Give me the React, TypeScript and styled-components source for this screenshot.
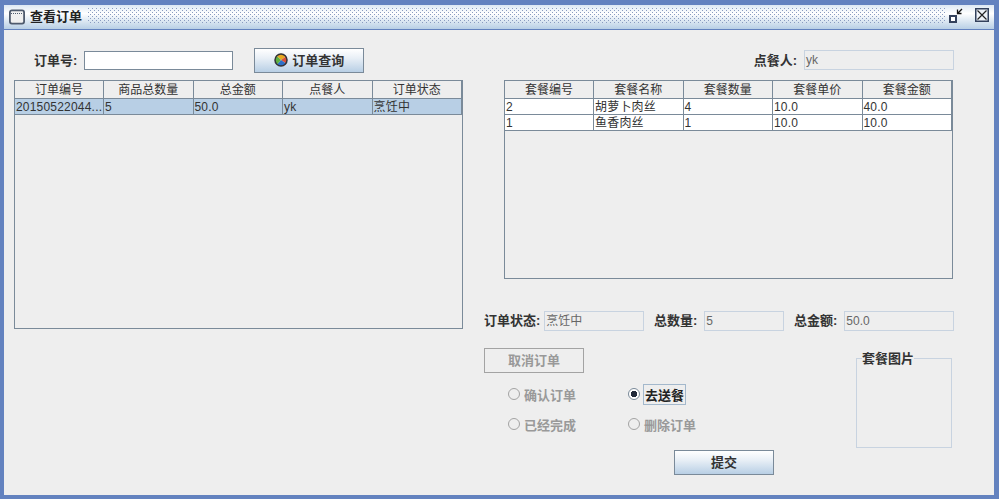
import styled, { createGlobalStyle } from "styled-components";

const FONT = `"Liberation Sans", "Noto Sans CJK SC", sans-serif`;
const LINE = "#7a8a99";
const SOFT = "#c8d3e0";

const orders = [["20150522044...", "5", "50.0", "yk", "烹饪中"]];
const items = [
  ["2", "胡萝卜肉丝", "4", "10.0", "40.0"],
  ["1", "鱼香肉丝", "1", "10.0", "10.0"],
];

const GlobalStyle = createGlobalStyle`
  html, body {
    margin: 0;
    padding: 0;
    background: #eeeeee;
  }
`;

const Frame = styled.div`
  width: 999px;
  height: 499px;
  box-sizing: border-box;
  border: solid #6382bf;
  border-width: 5px 5px 4px 4px;
  display: flex;
  flex-direction: column;
  background: #eeeeee;
  font-family: ${FONT};
  font-size: 13px;
  color: #333333;
  overflow: hidden;
`;

const TitleBar = styled.div`
  height: 25px;
  flex: none;
  display: flex;
  align-items: center;
  padding: 0 5px 0 5px;
  background: linear-gradient(#dde8f3, #ffffff 35%, #b8cfe5);
  border-bottom: 1px solid #6382bf;
  box-sizing: border-box;
`;

const TitleText = styled.span`
  font-weight: bold;
  margin-left: 5px;
  padding-bottom: 3px;
  color: #222222;
`;

const Bumps = styled.div`
  flex: 1;
  height: 16px;
  margin: 0 4px 2px 6px;
  background:
    radial-gradient(circle at 0.5px 0.5px, #8a9cc0 0.7px, transparent 0.7px) 0 0 / 4px 4px,
    radial-gradient(circle at 0.5px 0.5px, #8a9cc0 0.7px, transparent 0.7px) 2px 2px / 4px 4px;
`;

const WindowButtons = styled.div`
  display: flex;
  align-items: center;
  gap: 12px;
  padding-bottom: 4px;
`;

const Body = styled.div`
  flex: 1;
  display: flex;
  padding: 18px 40px 0 10px;
  gap: 21px;
`;

const LeftColumn = styled.div`
  width: 449px;
  display: flex;
  flex-direction: column;
`;

const SearchRow = styled.div`
  height: 25px;
  display: flex;
  align-items: center;
  padding-left: 20px;
  margin-bottom: 7px;
`;

const Label = styled.span`
  font-weight: bold;
  white-space: nowrap;
  padding-bottom: 2px;
`;

const SearchInput = styled.input`
  width: 149px;
  height: 19px;
  box-sizing: border-box;
  margin: 0 21px 1px 7px;
  padding: 0 2px;
  border: 1px solid ${LINE};
  background: #ffffff;
`;

const Button = styled.button<{ $disabled?: boolean }>`
  width: ${(p) => (p.$disabled ? "100px" : "110px")};
  height: 25px;
  box-sizing: border-box;
  display: flex;
  align-items: center;
  justify-content: center;
  gap: 4px;
  padding: 0 0 2px;
  font: bold 13px ${FONT};
  color: ${(p) => (p.$disabled ? "#999999" : "#333333")};
  border: 1px solid ${(p) => (p.$disabled ? "#a3a3a3" : LINE)};
  background: ${(p) =>
    p.$disabled ? "#eeeeee" : "linear-gradient(#ffffff, #e8eff6 40%, #b8cfe5)"};
`;

const SubmitButton = styled(Button)`
  width: 100px;
  margin-left: 190px;
  margin-top: 10px;
`;

const TableBox = styled.div<{ $width: number; $height: number }>`
  width: ${(p) => p.$width}px;
  height: ${(p) => p.$height}px;
  box-sizing: border-box;
  border: 1px solid ${LINE};
  flex: none;
`;

const Grid = styled.table`
  width: 100%;
  table-layout: fixed;
  border-collapse: collapse;
  font-size: 12px;
`;

const HeadCell = styled.th`
  height: 15px;
  padding: 2px 0 0;
  line-height: 15px;
  font-weight: normal;
  text-align: center;
  background: #eeeeee;
  border-right: 1px solid ${LINE};
  border-bottom: 1px solid ${LINE};
  &:first-child {
    width: 88px;
  }
`;

const Cell = styled.td<{ $selected?: boolean }>`
  height: 13px;
  padding: 2px 0 0 1px;
  line-height: 13px;
  letter-spacing: 0.2px;
  white-space: nowrap;
  overflow: hidden;
  background: ${(p) => (p.$selected ? "#b8cfe5" : "#ffffff")};
  border-right: 1px solid ${LINE};
  border-bottom: 1px solid ${LINE};
`;

const RightColumn = styled.div`
  width: 470px;
  display: flex;
  flex-direction: column;
`;

const BuyerRow = styled.div`
  height: 24px;
  display: flex;
  align-items: center;
  justify-content: flex-end;
  gap: 7px;
  margin-bottom: 8px;
`;

const ReadOnly = styled.div<{ $width: number }>`
  width: ${(p) => p.$width}px;
  height: 20px;
  box-sizing: border-box;
  padding-left: 1px;
  font-size: 12px;
  line-height: 18px;
  border: 1px solid ${SOFT};
  color: #666666;
`;

const TableIndent = styled.div`
  padding-left: 20px;
`;

const StatusRow = styled.div`
  display: flex;
  align-items: center;
  margin-top: 31px;
`;

const StatusGroup = styled.div<{ $width: number; $gap: number }>`
  width: ${(p) => p.$width}px;
  display: flex;
  align-items: center;
  gap: ${(p) => p.$gap}px;
`;

const LowerArea = styled.div`
  display: flex;
  justify-content: space-between;
  margin-top: 17px;
`;

const Controls = styled.div`
  display: flex;
  flex-direction: column;
  align-items: flex-start;
`;

const RadioGrid = styled.div`
  display: grid;
  grid-template-columns: 120px 120px;
  grid-auto-rows: 30px;
  align-items: center;
  margin: 7px 0 0 24px;
`;

const RadioItem = styled.div<{ $active?: boolean }>`
  display: flex;
  align-items: center;
  gap: 4px;
  font-weight: bold;
  padding-bottom: 2px;
  color: ${(p) => (p.$active ? "#222222" : "#999999")};
`;

const RadioDot = styled.span<{ $active?: boolean }>`
  width: 12px;
  height: 12px;
  box-sizing: border-box;
  border-radius: 50%;
  border: 1px solid ${(p) => (p.$active ? "#7a8a99" : "#a3a3a3")};
  background: ${(p) =>
    p.$active
      ? "radial-gradient(circle, #222a3a 0 3px, #ffffff 3.5px)"
      : "transparent"};
`;

const Focused = styled.span`
  outline: 1px solid #a3b8cc;
  padding: 0 1px;
`;

const PictureBox = styled.fieldset`
  width: 96px;
  height: 96px;
  box-sizing: border-box;
  margin: 4px 2px 0 0;
  padding: 0;
  border: 1px solid ${SOFT};
`;

const PictureLegend = styled.legend`
  font-weight: bold;
  padding: 0;
  margin-left: 5px;
  line-height: 1;
`;

const FrameIcon = () => (
  <svg width="16" height="16" viewBox="0 0 16 16">
    <rect x="0.9" y="1.4" width="14.2" height="13.2" rx="2" fill="#f0f0f0" stroke="#4f5b6e" strokeWidth="1.8" />
    <path d="M2 4.5h12" stroke="#4f5b6e" strokeDasharray="1 1" />
  </svg>
);

const RestoreIcon = () => (
  <svg width="14" height="15" viewBox="0 0 14 15">
    <rect x="1" y="8" width="6" height="6" fill="#fff" stroke="#33415c" strokeWidth="2" />
    <path d="M13 1 9 5M8.5 1.5V5.5H12.5" fill="none" stroke="#111" strokeWidth="1.3" />
  </svg>
);

const CloseIcon = () => (
  <svg width="14" height="14" viewBox="0 0 14 14">
    <rect x="0.75" y="0.75" width="12.5" height="12.5" fill="#eef2f8" stroke="#33415c" strokeWidth="1.5" />
    <path d="M2.5 2.5l9 9M11.5 2.5l-9 9" stroke="#222" strokeWidth="1.2" />
  </svg>
);

const BallIcon = () => (
  <svg width="14" height="14" viewBox="0 0 14 14">
    <path d="M7 7 2.5 2.8A6 6 0 0 1 12 3.6Z" fill="#e8a820" />
    <path d="M7 7 12 3.6A6 6 0 0 1 12 10.4Z" fill="#d8503a" />
    <path d="M7 7 12 10.4A6 6 0 0 1 3 11.5Z" fill="#2f6fc8" />
    <path d="M7 7 3 11.5A6 6 0 0 1 2.5 2.8Z" fill="#5cb040" />
    <circle cx="7" cy="7" r="6" fill="none" stroke="#33333a" strokeWidth="1.5" />
  </svg>
);

const DataTable = ({
  head,
  rows,
  selected,
}: {
  head: string[];
  rows: string[][];
  selected?: boolean;
}) => (
  <Grid>
    <thead>
      <tr>
        {head.map((h) => (
          <HeadCell key={h}>{h}</HeadCell>
        ))}
      </tr>
    </thead>
    <tbody>
      {rows.map((row) => (
        <tr key={row[0]}>
          {row.map((c, i) => (
            <Cell key={i} $selected={selected}>
              {c}
            </Cell>
          ))}
        </tr>
      ))}
    </tbody>
  </Grid>
);

export default function App() {
  return (
    <>
      <GlobalStyle />
      <Frame>
        <TitleBar>
          <FrameIcon />
          <TitleText>查看订单</TitleText>
          <Bumps />
          <WindowButtons>
            <RestoreIcon />
            <CloseIcon />
          </WindowButtons>
        </TitleBar>
        <Body>
          <LeftColumn>
            <SearchRow>
              <Label>订单号:</Label>
              <SearchInput />
              <Button>
                <BallIcon />
                订单查询
              </Button>
            </SearchRow>
            <TableBox $width={449} $height={249}>
              <DataTable
                head={["订单编号", "商品总数量", "总金额", "点餐人", "订单状态"]}
                rows={orders}
                selected
              />
            </TableBox>
          </LeftColumn>
          <RightColumn>
            <BuyerRow>
              <Label>点餐人:</Label>
              <ReadOnly $width={150}>yk</ReadOnly>
            </BuyerRow>
            <TableIndent>
              <TableBox $width={449} $height={199}>
                <DataTable
                  head={["套餐编号", "套餐名称", "套餐数量", "套餐单价", "套餐金额"]}
                  rows={items}
                />
              </TableBox>
            </TableIndent>
            <StatusRow>
              <StatusGroup $width={170} $gap={4}>
                <Label>订单状态:</Label>
                <ReadOnly $width={100}>烹饪中</ReadOnly>
              </StatusGroup>
              <StatusGroup $width={140} $gap={7}>
                <Label>总数量:</Label>
                <ReadOnly $width={80}>5</ReadOnly>
              </StatusGroup>
              <StatusGroup $width={160} $gap={7}>
                <Label>总金额:</Label>
                <ReadOnly $width={110}>50.0</ReadOnly>
              </StatusGroup>
            </StatusRow>
            <LowerArea>
              <Controls>
                <Button $disabled>取消订单</Button>
                <RadioGrid>
                  <RadioItem>
                    <RadioDot />
                    确认订单
                  </RadioItem>
                  <RadioItem $active>
                    <RadioDot $active />
                    <Focused>去送餐</Focused>
                  </RadioItem>
                  <RadioItem>
                    <RadioDot />
                    已经完成
                  </RadioItem>
                  <RadioItem>
                    <RadioDot />
                    删除订单
                  </RadioItem>
                </RadioGrid>
                <SubmitButton>提交</SubmitButton>
              </Controls>
              <PictureBox>
                <PictureLegend>套餐图片</PictureLegend>
              </PictureBox>
            </LowerArea>
          </RightColumn>
        </Body>
      </Frame>
    </>
  );
}
